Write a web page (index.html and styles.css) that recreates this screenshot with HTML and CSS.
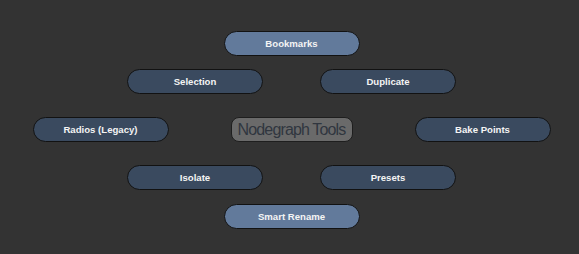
FILE: index.html
```html
<!DOCTYPE html>
<html>
<head>
<meta charset="utf-8">
<link rel="stylesheet" href="styles.css">
</head>
<body>
<div class="menu">
  <div class="row row-top">
    <div class="btn btn-light">Bookmarks</div>
  </div>
  <div class="row row-2">
    <div class="btn">Selection</div>
    <div class="btn">Duplicate</div>
  </div>
  <div class="row row-mid">
    <div class="btn">Radios (Legacy)</div>
    <div class="title">Nodegraph Tools</div>
    <div class="btn">Bake Points</div>
  </div>
  <div class="row row-2">
    <div class="btn">Isolate</div>
    <div class="btn">Presets</div>
  </div>
  <div class="row row-bottom">
    <div class="btn btn-light">Smart Rename</div>
  </div>
</div>
</body>
</html>
```

FILE: styles.css
```css
html, body {
  margin: 0;
  padding: 0;
  background: #333333;
  width: 579px;
  height: 254px;
  overflow: hidden;
}

.menu {
  display: flex;
  flex-direction: column;
  align-items: center;
  padding: 31px 0 0 4px;
  font-family: "Liberation Sans", Arial, sans-serif;
}

.row {
  display: flex;
  justify-content: center;
  align-items: center;
}

.row-top { margin-bottom: 13px; }
.row-2 { gap: 57px; }
.row-mid { gap: 62px; margin: 23px 0; }
.row-bottom { margin-top: 14px; }

.btn {
  box-sizing: border-box;
  width: 136px;
  height: 25px;
  border: 1px solid #121212;
  border-radius: 13px;
  background: #3a4a5f;
  color: #f4f4f4;
  font-weight: bold;
  font-size: 9.6px;
  display: flex;
  align-items: center;
  justify-content: center;
}

.btn-light {
  background: #627a9b;
}

.title {
  box-sizing: border-box;
  width: 122px;
  height: 25px;
  border: 1px solid #1e1e1e;
  border-radius: 8px;
  background: #6a6a6a;
  color: #30363f;
  font-size: 16px;
  letter-spacing: -0.85px;
  display: flex;
  align-items: center;
  justify-content: center;
}
```
